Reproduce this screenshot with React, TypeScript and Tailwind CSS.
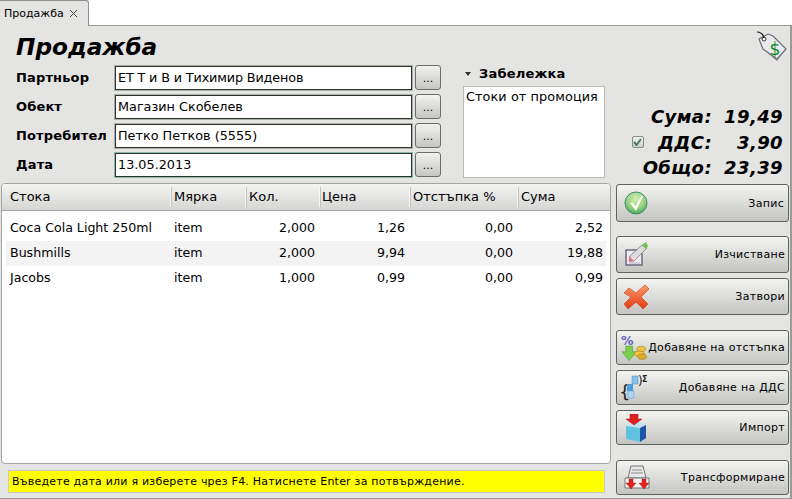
import React from "react";

const btnCls =
  "flex items-center justify-between w-full whitespace-nowrap rounded-[3px] border border-[#5f615c] bg-gradient-to-b from-[#f4f4f2] to-[#c4c5c1] pl-[7px] pr-[3px] text-[11px] leading-none text-black tracking-[0.3px]";

function Check() {
  return (
    <svg width="24" height="24" viewBox="0 0 24 24">
      <defs>
        <radialGradient id="g1" cx="50%" cy="30%" r="75%">
          <stop offset="0" stopColor="#d2edb4" />
          <stop offset="0.6" stopColor="#93cf7e" />
          <stop offset="1" stopColor="#3f9a5a" />
        </radialGradient>
      </defs>
      <circle cx="12" cy="12" r="11" fill="url(#g1)" stroke="#3d8f6a" strokeWidth="1" />
      <path d="M6 12l2.500-1 3 4L17.500 4.500 19 5.500 12 20z" fill="#f7fcf0" />
    </svg>
  );
}
function Clear() {
  return (
    <svg width="26" height="26" viewBox="0 0 26 26">
      <path d="M2 8h16v15H2z" fill="#ece9f2" stroke="#6e6a80" strokeWidth="1.500" />
      <path d="M8 11h8M5 21h11" stroke="#b5b2c2" strokeWidth="1" />
      <path d="M5 19l1-5L18 3l5 3L10 19z" fill="#dcdcdc" stroke="#777" strokeWidth=".7" />
      <path d="M18 3l4-3 2 4-2 3z" fill="#6fbf52" />
      <path d="M5 14l5 5-5 1z" fill="#e2707f" />
    </svg>
  );
}
function CloseX() {
  return (
    <svg width="26" height="26" viewBox="0 0 26 26">
      <defs>
        <linearGradient id="g2" x1="0" y1="0" x2="0" y2="1">
          <stop offset="0" stopColor="#fa9a6a" />
          <stop offset="1" stopColor="#e63a12" />
        </linearGradient>
      </defs>
      <path d="M0 9l5-5 7 5 9-8 4 4-8 8 7 7-5 5-7-7-8 7-4-5 7-7z" fill="url(#g2)" stroke="#cc4a1c" strokeWidth=".7" strokeLinejoin="round" />
    </svg>
  );
}
function Percent() {
  return (
    <svg width="27" height="29" viewBox="0 0 28 29">
      <text x="1" y="12" fontFamily="DejaVu Sans" fontWeight="700" fontSize="13" fill="#6464c0">%</text>
      <path d="M6 13h7v6h4l-7.500 9L2 19h4z" fill="#7ccc4e" stroke="#4f9a32" strokeWidth=".6" />
      <ellipse cx="22" cy="16" rx="4.500" ry="2.800" fill="#efc744" stroke="#9a7814" strokeWidth=".6" />
      <ellipse cx="20" cy="21" rx="5" ry="2.800" fill="#efc744" stroke="#9a7814" strokeWidth=".6" />
      <ellipse cx="23" cy="24" rx="4.500" ry="2.800" fill="#dcae2c" stroke="#9a7814" strokeWidth=".6" />
    </svg>
  );
}
function Vat() {
  return (
    <svg width="30" height="30" viewBox="0 0 30 30">
      <text x="0" y="25" fontFamily="DejaVu Sans" fontSize="18" fill="#222">{"{"}</text>
      <rect x="13" y="3" width="6" height="8" fill="#86c0ec" stroke="#4f90c8" strokeWidth=".5" />
      <rect x="8" y="11" width="6" height="7" fill="#4f9ad8" />
      <rect x="9" y="18" width="6" height="7" fill="#a9d4f4" stroke="#5f9fd4" strokeWidth=".5" />
      <text x="19" y="12" fontFamily="DejaVu Sans" fontSize="12" fill="#222">)</text>
      <text x="23" y="9" fontFamily="DejaVu Sans" fontWeight="700" fontSize="8" fill="#222">Σ</text>
    </svg>
  );
}
function ImportIco() {
  return (
    <svg width="26" height="28" viewBox="0 0 26 28">
      <path d="M2 12l13-4 7 3-13 3z" fill="#b8e6f4" />
      <path d="M16 14l6-3v13l-6 4z" fill="#1a55a8" />
      <path d="M2 12l14 2v14L2 25z" fill="#62c2e2" />
      <path d="M6 0h8v5h4l-8 6-8-6h4z" fill="#e02020" stroke="#a01010" strokeWidth=".5" />
    </svg>
  );
}
function Transform() {
  return (
    <svg width="26" height="28" viewBox="0 0 26 28">
      <path d="M7 2h12l3 12H4z" fill="#e8e8e8" stroke="#666" strokeWidth=".9" />
      <path d="M8 6h10M7 9h12" stroke="#8a8a8a" strokeWidth="1" />
      <path d="M1 14h24v10H1z" fill="#f4f4f4" stroke="#666" strokeWidth=".9" />
      <path d="M5 15h4v4h3l-5 6-5-6h3zM18 15h4v4h3l-5 6-5-6h3z" fill="#e02222" stroke="#a01010" strokeWidth=".4" />
    </svg>
  );
}
function Tag() {
  return (
    <svg width="32" height="32" viewBox="0 0 32 32">
      <path d="M4 8l9-5 5 2 13 13-9 10-14-10z" fill="#e9e9ee" stroke="#6f6f78" strokeWidth="1.200" strokeLinejoin="round" />
      <path d="M8 18l14 10 9-10-9 12z" fill="#808088" />
      <circle cx="9" cy="8" r="2" fill="#fff" stroke="#333" strokeWidth="1" />
      <path d="M2 1c3 0 6 2 7 6" fill="none" stroke="#111" strokeWidth="1.200" />
      <text x="20" y="24" textAnchor="middle" fontFamily="DejaVu Sans" fontSize="17" fontWeight="400" fill="#0a8a1c">$</text>
    </svg>
  );
}

const Field = ({ label, value, active, tight }: { label: string; value: string; active?: boolean; tight?: boolean }) => (
  <div className="flex items-center h-[25px]">
    <span className="w-[99px] font-bold text-[13px] tracking-[0.15px] text-black">{label}</span>
    <div
      className={`w-[297px] h-[24px] flex items-center pl-[2px] bg-white text-[12.800px] border border-[#2e322c] ${
        active ? "shadow-[0_0_0_1px_#8fb8ad]" : "shadow-[0_0_0_1px_#a9b0a8]"
      } ${tight ? "tracking-[-0.15px]" : ""}`}
    >
      {value}
    </div>
    <div className="ml-[3px] w-[26px] h-[25px] flex items-end justify-center pb-[5px] rounded-[3px] border border-[#6b6d68] bg-gradient-to-b from-[#f2f2f0] to-[#c6c7c3] text-[11px] leading-[10px]">
      ...
    </div>
  </div>
);

const cols = [
  { name: "Стока", w: "w-[169px]" },
  { name: "Мярка", w: "w-[75px]" },
  { name: "Кол.", w: "w-[74px]" },
  { name: "Цена", w: "w-[90px]" },
  { name: "Отстъпка %", w: "w-[108px]" },
  { name: "Сума", w: "w-[88px]" },
];
const rows = [
  ["Coca Cola Light 250ml", "item", "2,000", "1,26", "0,00", "2,52"],
  ["Bushmills", "item", "2,000", "9,94", "0,00", "19,88"],
  ["Jacobs", "item", "1,000", "0,99", "0,00", "0,99"],
];

export default function App() {
  return (
    <div className="w-[792px] h-[499px] bg-white flex flex-col overflow-hidden text-black font-['DejaVu_Sans',sans-serif]">
      <div className="h-[25px] flex shrink-0">
        <div className="w-[89px] h-[26px] z-10 flex items-center pl-[4px] gap-[5px] bg-[#e4e4e3] border-r border-t border-[#8f918c] rounded-tr-[3px] text-[11px] leading-none">
          <span>Продажба</span>
          <svg width="9" height="9" viewBox="0 0 9 9">
            <path d="M1 1l7 7M8 1L1 8" stroke="#444" strokeWidth="1" />
          </svg>
        </div>
      </div>
      <div className="flex-1 min-h-0 bg-[#e4e4e3] border-t border-r-2 border-b border-[#9a9c97] flex flex-col">
        <div className="h-[157px] shrink-0 flex pl-[16px]">
          <div className="flex flex-col">
            <div className="h-[39px] flex items-end pb-[4px]">
              <h1 className="font-bold italic text-[23.200px] leading-[29px]">Продажба</h1>
            </div>
            <div className="flex flex-col gap-[4px]">
              <Field label="Партньор" value="ЕТ Т и В и Тихимир Виденов" tight />
              <Field label="Обект" value="Магазин Скобелев" />
              <Field label="Потребител" value="Петко Петков (5555)" />
              <Field label="Дата" value="13.05.2013" active />
            </div>
          </div>
          <div className="ml-[22px] w-[142px] flex flex-col pt-[37px]">
            <div className="flex items-center h-[23px] pb-[1px] font-bold text-[13px] tracking-[0.2px] pl-[2px] gap-[8px]">
              <span className="w-0 h-0 border-l-[3.500px] border-r-[3.500px] border-t-[4px] border-l-transparent border-r-transparent border-t-[#333]" />
              Забележка
            </div>
            <div className="h-[92px] bg-white border border-[#b9bbb6] pl-[2px] pt-[2px] text-[12.800px] leading-[16px] tracking-[0.1px]">
              Стоки от промоция
            </div>
          </div>
          <div className="flex-1 flex flex-col items-end pr-[7px]">
            <div className="mt-[5px] mr-[-4px]">
              <Tag />
            </div>
            <div className="mt-[41px] flex flex-col items-end font-bold italic text-[18px] leading-[25.500px] tracking-[0.4px]">
              <div className="flex justify-end items-center">
                <span>Сума:</span>
                <span className="w-[71px] text-right">19,49</span>
              </div>
              <div className="flex justify-end items-center">
                <span className="mr-[14px] w-[12px] h-[12px] rounded-[2px] border border-[#8a8c88] bg-gradient-to-b from-[#f2f2f0] to-[#cfd0cc] flex items-center justify-center">
                  <svg width="9" height="8" viewBox="0 0 9 8">
                    <path d="M1 4l2.500 3L8 1" fill="none" stroke="#4a7a6c" strokeWidth="2" />
                  </svg>
                </span>
                <span>ДДС:</span>
                <span className="w-[71px] text-right">3,90</span>
              </div>
              <div className="flex justify-end items-center">
                <span>Общо:</span>
                <span className="w-[71px] text-right">23,39</span>
              </div>
            </div>
          </div>
        </div>
        <div className="flex-1 min-h-0 flex pl-[1px] pr-[1px]">
          <div className="w-[610px] flex flex-col">
            <div className="h-[281px] bg-white border border-[#a3a5a0] rounded-[4px] overflow-hidden">
              <div className="h-[27px] flex items-center bg-gradient-to-b from-[#f4f4f3] to-[#d5d6d3] border-b border-[#a3a5a0] text-[13px]">
                {cols.map((c, i) => (
                  <div key={c.name} className={`${c.w} h-[20px] flex items-center ${i === 0 ? "pl-[8px]" : i === 3 ? "pl-[2px]" : "pl-[3px]"} ${i < 5 ? "border-r border-[#f6f6f5] shadow-[1px_0_0_#c4c5c2]" : ""}`}>
                    {c.name}
                  </div>
                ))}
              </div>
              <div className="pt-[5px] pl-[4px] pr-[4px] text-[12.600px]">
                {rows.map((r, i) => (
                  <div key={r[0]} className={`h-[25px] flex items-center ${i === 1 ? "bg-[#f3f3f3]" : ""}`}>
                    <span className="w-[164px] pl-[4px]">{r[0]}</span>
                    <span className="w-[75px] pl-[4px]">{r[1]}</span>
                    <span className="w-[70px] text-right">{r[2]}</span>
                    <span className="w-[90px] text-right">{r[3]}</span>
                    <span className="w-[108px] text-right">{r[4]}</span>
                    <span className="w-[90px] text-right">{r[5]}</span>
                  </div>
                ))}
              </div>
            </div>
            <div className="mt-[6px] ml-[7px] w-[597px] h-[23px] flex items-center bg-[#ffff00] border border-[#c9cac6] pl-[3px] text-[11px] tracking-[0.22px] leading-none">
              Въведете дата или я изберете чрез F4. Натиснете Enter за потвърждение.
            </div>
          </div>
          <div className="ml-[5px] w-[173px] flex flex-col">
            <button className={`${btnCls} h-[38px] mt-[1px]`}><Check /><span className="mr-[1px]">Запис</span></button>
            <button className={`${btnCls} h-[37px] mt-[14px]`}><Clear /><span>Изчистване</span></button>
            <button className={`${btnCls} h-[37px] mt-[5px]`}><CloseX /><span>Затвори</span></button>
            <button className={`${btnCls} h-[35px] mt-[15px] !pl-[3px]`}><Percent /><span>Добавяне на отстъпка</span></button>
            <button className={`${btnCls} h-[35px] mt-[5px] !pl-[2px]`}><Vat /><span>Добавяне на ДДС</span></button>
            <button className={`${btnCls} h-[35px] mt-[5px]`}><ImportIco /><span>Импорт</span></button>
            <button className={`${btnCls} h-[35px] mt-[15px]`}><Transform /><span>Трансформиране</span></button>
          </div>
        </div>
      </div>
    </div>
  );
}
